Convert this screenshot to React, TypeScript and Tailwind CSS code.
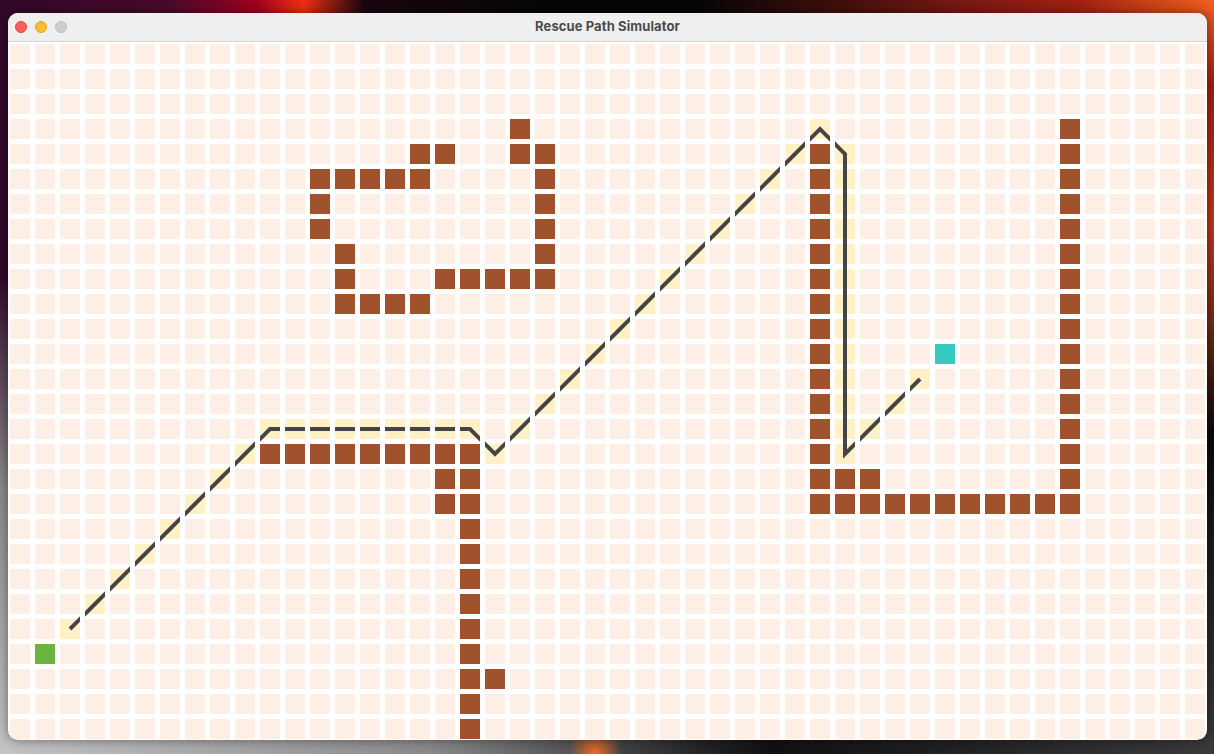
import React from 'react';

const COLS = 48;
const ROWS = 28;
const CELL = 20;
const STEP = 25;

// wall cells as [col, row]
const walls: [number, number][] = [];
const addRow = (r: number, from: number, to: number) => {
  for (let c = from; c <= to; c++) walls.push([c, r]);
};
const addCol = (c: number, from: number, to: number) => {
  for (let r = from; r <= to; r++) walls.push([c, r]);
};

// upper left maze
walls.push([20, 3]);
addRow(4, 16, 17);
addRow(4, 20, 21);
addRow(5, 12, 16);
addCol(21, 5, 9);
addCol(12, 6, 7);
addCol(13, 8, 10);
addRow(9, 17, 20);
addRow(10, 14, 16);

// right box
addCol(32, 4, 18);
addCol(42, 3, 18);
addRow(17, 33, 34);
addRow(18, 33, 41);

// lower wall
addRow(16, 10, 18);
addRow(17, 17, 18);
addRow(18, 17, 18);
addCol(18, 19, 27);
walls.push([19, 25]);

const start: [number, number] = [1, 24];
const goal: [number, number] = [37, 12];

const path: [number, number][] = [];
for (let c = 2; c <= 9; c++) path.push([c, 25 - c]);
for (let c = 10; c <= 18; c++) path.push([c, 15]);
path.push([19, 16]);
for (let k = 0; k <= 12; k++) path.push([20 + k, 15 - k]);
for (let r = 4; r <= 16; r++) path.push([33, r]);
path.push([34, 15], [35, 14], [36, 13]);

const key = (c: number, r: number) => `${c},${r}`;
const wallSet = new Set(walls.map(([c, r]) => key(c, r)));
const pathSet = new Set(path.map(([c, r]) => key(c, r)));
const pathCols = Array.from(new Set(path.map(([c]) => c)));

const cellClass = (c: number, r: number) => {
  if (c === start[0] && r === start[1]) return 'bg-[#6db33f]';
  if (c === goal[0] && r === goal[1]) return 'bg-[#35c9c0]';
  if (wallSet.has(key(c, r))) return 'bg-[#a0522d]';
  if (pathSet.has(key(c, r))) return 'bg-[#fff0c6]';
  return 'bg-[#fdeee6]';
};

const TitleBar = () => (
  <div className="relative h-[29px] shrink-0 bg-[#efefef] border-b border-[#d4d4d4] flex items-center pl-[7px]">
    <div className="flex gap-[8px]">
      <span className="w-[12px] h-[12px] rounded-full bg-[#fe5f57] border border-[#e2463f]" />
      <span className="w-[12px] h-[12px] rounded-full bg-[#febc2e] border border-[#e1a116]" />
      <span className="w-[12px] h-[12px] rounded-full bg-[#cdcdcd] border border-[#b9b9b9]" />
    </div>
    <div className="absolute inset-0 flex items-center justify-center pointer-events-none">
      <span className="text-[13px] font-bold text-[#4b4b4b] font-['Inter','Liberation_Sans',sans-serif] tracking-[0.1px]">
        Rescue Path Simulator
      </span>
    </div>
  </div>
);

const points = path.map(([c, r]) => `${c * STEP + CELL / 2},${r * STEP + CELL / 2}`).join(' ');

// the route only shows inside each column of cells: the white column gaps cut it, the row gaps don't
const PathLine = () => (
  <>
    {pathCols.map(c => (
      <div
        key={c}
        className="absolute top-0 w-[20px] h-[700px] overflow-hidden pointer-events-none"
        style={{ left: c * STEP }}
      >
        <svg
          className="absolute top-0"
          style={{ left: -c * STEP }}
          width={COLS * STEP}
          height={ROWS * STEP}
        >
          <polyline points={points} fill="none" stroke="#454545" strokeWidth={4} strokeLinejoin="miter" />
        </svg>
      </div>
    ))}
  </>
);

const App = () => {
  return (
    <div className="w-[1214px] h-[754px] overflow-hidden pl-[8px] pt-[13px] bg-[radial-gradient(ellipse_at_49%_100%,#f06a20_0%,transparent_3%),radial-gradient(ellipse_at_0%_100%,#c4c4c4_0%,#8a8a8a_25%,transparent_45%),radial-gradient(ellipse_at_100%_100%,#3a3a3a_0%,#0a0a0a_30%,transparent_50%),radial-gradient(ellipse_at_100%_0%,#f06020_0%,#a02010_8%,transparent_30%),linear-gradient(90deg,#32082a_0%,#4a0a2a_14%,#a0001e_21%,#f03010_25%,#1a0610_30%,#060606_45%,#080608_70%,#2c0a28_88%,#3a0a2a_96%,#e04818_100%)]">
      <div className="w-[1199px] h-[727px] rounded-[10px] overflow-hidden bg-white flex flex-col shadow-[0_0_12px_rgba(0,0,0,0.45)]">
        <TitleBar />
        <div className="pl-[2px] pt-[2px]">
          <div className="relative">
            <div className="grid grid-cols-[repeat(48,20px)] auto-rows-[20px] gap-[5px]">
              {Array.from({ length: ROWS }, (_, r) =>
                Array.from({ length: COLS }, (_, c) => (
                  <div key={key(c, r)} className={cellClass(c, r)} />
                ))
              )}
            </div>
            <PathLine />
          </div>
        </div>
      </div>
    </div>
  );
};

export default App;
